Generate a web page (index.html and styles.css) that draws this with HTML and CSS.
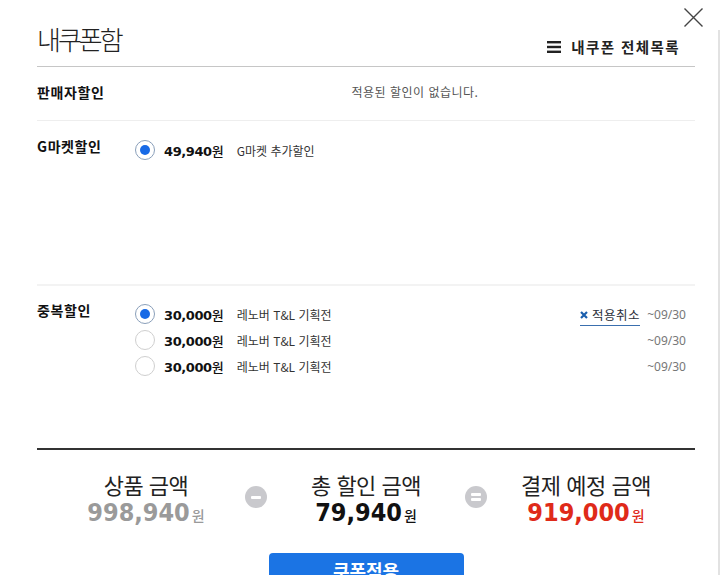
FILE: index.html
```html
<!DOCTYPE html>
<html lang="ko">
<head>
<meta charset="utf-8">
<title>내쿠폰함</title>
<link rel="stylesheet" href="styles.css">
</head>
<body>
<div class="popup">
  <div class="edge"></div>
  <button class="close" type="button" aria-label="닫기">
    <svg width="21" height="21" viewBox="0 0 21 21"><path d="M1.5 1.5 L19.5 19.5 M19.5 1.5 L1.5 19.5" stroke="#444" stroke-width="1.4" fill="none"/></svg>
  </button>
  <header class="head">
    <h1 class="title">내쿠폰함</h1>
    <a class="all-list" href="#">
      <svg class="menu-icon" width="14" height="12" viewBox="0 0 14 12"><rect x="0" y="0" width="14" height="2.4" fill="#222"/><rect x="0" y="4.8" width="14" height="2.4" fill="#222"/><rect x="0" y="9.6" width="14" height="2.4" fill="#222"/></svg>
      <span>내쿠폰 전체목록</span>
    </a>
  </header>

  <section class="row row-seller">
    <h2 class="row-label">판매자할인</h2>
    <p class="empty">적용된 할인이 없습니다.</p>
  </section>

  <section class="row row-gmarket">
    <h2 class="row-label">G마켓할인</h2>
    <ul class="coupons">
      <li class="coupon">
        <span class="radio on"></span>
        <strong class="amount">49,940<span class="unit">원</span></strong>
        <span class="name">G마켓 추가할인</span>
      </li>
    </ul>
  </section>

  <section class="row row-dup">
    <h2 class="row-label">중복할인</h2>
    <ul class="coupons">
      <li class="coupon">
        <span class="radio on"></span>
        <strong class="amount">30,000<span class="unit">원</span></strong>
        <span class="name">레노버 T&amp;L 기획전</span>
        <a class="cancel" href="#"><svg class="cancel-x" width="8" height="8" viewBox="0 0 8 8"><path d="M1 1 L7 7 M7 1 L1 7" stroke="#1b5fae" stroke-width="2.2"/></svg>적용취소</a>
        <span class="date">~09/30</span>
      </li>
      <li class="coupon">
        <span class="radio"></span>
        <strong class="amount">30,000<span class="unit">원</span></strong>
        <span class="name">레노버 T&amp;L 기획전</span>
        <span class="date">~09/30</span>
      </li>
      <li class="coupon">
        <span class="radio"></span>
        <strong class="amount">30,000<span class="unit">원</span></strong>
        <span class="name">레노버 T&amp;L 기획전</span>
        <span class="date">~09/30</span>
      </li>
    </ul>
  </section>

  <div class="summary">
    <div class="sum-col">
      <p class="sum-label">상품 금액</p>
      <p class="sum-value gray">998,940<span class="sum-unit">원</span></p>
    </div>
    <div class="op"><span class="op-circle minus"></span></div>
    <div class="sum-col">
      <p class="sum-label">총 할인 금액</p>
      <p class="sum-value">79,940<span class="sum-unit">원</span></p>
    </div>
    <div class="op"><span class="op-circle equals"></span></div>
    <div class="sum-col">
      <p class="sum-label">결제 예정 금액</p>
      <p class="sum-value red">919,000<span class="sum-unit">원</span></p>
    </div>
  </div>

  <div class="actions">
    <button class="apply" type="button">쿠폰적용</button>
  </div>
</div>
</body>
</html>
```

FILE: styles.css
```css
html, body {
  margin: 0;
  padding: 0;
  background: #fff;
}

body {
  font-family: "Noto Sans CJK KR", "Noto Sans", sans-serif;
  color: #222;
}

h1, h2, p, ul {
  margin: 0;
  padding: 0;
}

ul {
  list-style: none;
}

a {
  color: inherit;
  text-decoration: none;
}

.popup {
  position: relative;
  width: 720px;
  height: 575px;
  overflow: hidden;
  box-sizing: border-box;
  padding: 0 25px 0 37px;
}

.edge {
  position: absolute;
  right: 0;
  top: 30px;
  bottom: 0;
  width: 2px;
  background: #e2e2e2;
}

.close {
  position: absolute;
  top: 7px;
  left: 683px;
  width: 21px;
  height: 21px;
  padding: 0;
  border: 0;
  background: none;
}

.close svg {
  display: block;
}

/* header */
.head {
  height: 67px;
  box-sizing: border-box;
  border-bottom: 1px solid #c6c6c6;
  display: flex;
  justify-content: space-between;
  align-items: flex-start;
}

.title {
  margin-top: 21px;
  font-size: 26px;
  line-height: 35px;
  font-weight: 300;
  letter-spacing: -3px;
  color: #222;
}

.all-list {
  align-self: flex-end;
  margin-bottom: 9px;
  margin-right: 15px;
  display: flex;
  align-items: center;
  font-size: 14.5px;
  line-height: 20px;
  font-weight: 700;
  letter-spacing: 1.4px;
  color: #222;
}

.menu-icon {
  display: block;
  margin-right: 10px;
}

/* rows */
.row {
  display: flex;
  box-sizing: border-box;
}

.row-label {
  width: 98px;
  flex: none;
  font-size: 14px;
  line-height: 22px;
  font-weight: 700;
  letter-spacing: 0.6px;
  color: #111;
}

.row-seller {
  height: 54px;
  padding-bottom: 4px;
  align-items: center;
  border-bottom: 1px solid #eeeeee;
}

.empty {
  flex: 1;
  text-align: center;
  font-size: 12px;
  line-height: 20px;
  letter-spacing: 0.5px;
  color: #555;
}

.row-gmarket {
  height: 165px;
  padding-top: 16px;
  border-bottom: 2px solid #f3f3f3;
  align-items: flex-start;
}

.row-dup {
  height: 162px;
  padding-top: 15px;
  align-items: flex-start;
}

.row-gmarket .row-label,
.row-dup .row-label {
  margin-top: -2px;
}

.coupons {
  flex: 1;
  padding-right: 9px;
}

.coupon {
  display: flex;
  align-items: center;
  height: 26px;
}

.radio {
  flex: none;
  width: 18px;
  height: 18px;
  border-radius: 50%;
  border: 1px solid #cfcfcf;
  background: #fff;
  margin-right: 9px;
  position: relative;
}

.radio.on {
  border-color: #8a9fba;
}

.radio.on::after {
  content: "";
  position: absolute;
  left: 4px;
  top: 4px;
  width: 10px;
  height: 10px;
  border-radius: 50%;
  background: #1669e6;
}

.amount {
  font-family: "DejaVu Sans", "Noto Sans", sans-serif;
  font-size: 13px;
  letter-spacing: -0.4px;
  font-weight: 700;
  color: #111;
  margin-right: 13px;
}

.amount .unit {
  font-family: "Noto Sans CJK KR", sans-serif;
  font-weight: 500;
  font-size: 13px;
  letter-spacing: 0;
}

.name {
  flex: 1;
  font-size: 12px;
  color: #333;
}

.cancel {
  display: flex;
  align-items: center;
  font-size: 12.5px;
  line-height: 18px;
  color: #2b2f3a;
  letter-spacing: 0.5px;
  border-bottom: 1px solid #3a6fae;
  padding-bottom: 1px;
  margin-top: 4px;
  margin-right: 7px;
}

.cancel-x {
  display: block;
  margin-right: 4px;
}

.date {
  width: 39px;
  text-align: right;
  font-family: "Noto Sans", sans-serif;
  font-size: 12px;
  color: #777;
}

/* summary */
.summary {
  border-top: 2px solid #333;
  padding-top: 20px;
  display: flex;
  justify-content: center;
}

.sum-col {
  width: 176px;
  text-align: center;
}

.sum-label {
  font-size: 22px;
  line-height: 28px;
  font-weight: 400;
  color: #222;
  letter-spacing: -0.5px;
}

.sum-value {
  font-family: "DejaVu Sans Condensed", "Liberation Sans", sans-serif;
  font-stretch: condensed;
  font-size: 25px;
  line-height: 28px;
  margin-top: 1px;
  font-weight: 700;
  color: #111;
}

.sum-value.gray {
  color: #9a9a9a;
}

.sum-value.red {
  color: #df2a19;
}

.sum-unit {
  font-family: "Noto Sans CJK KR", sans-serif;
  font-size: 14px;
  font-weight: 500;
  margin-left: 2px;
}

.op {
  width: 44px;
  display: flex;
  justify-content: center;
  padding-top: 16px;
}

.op-circle {
  width: 22px;
  height: 22px;
  border-radius: 50%;
  background: #c9c9cd;
  position: relative;
}

.op-circle::before,
.op-circle.equals::after {
  content: "";
  position: absolute;
  left: 6px;
  width: 10px;
  height: 3px;
  border-radius: 1px;
  background: #fff;
}

.op-circle.minus::before {
  top: 9.5px;
}

.op-circle.equals::before {
  top: 7px;
}

.op-circle.equals::after {
  top: 12px;
}

.actions {
  display: flex;
  justify-content: center;
  margin-top: 24px;
}

.apply {
  width: 195px;
  height: 46px;
  border: 0;
  border-radius: 4px;
  background: #1b74e4;
  color: #fff;
  font-family: "Noto Sans CJK KR", sans-serif;
  font-size: 18px;
  font-weight: 700;
  text-decoration: underline;
  padding: 0;
  line-height: 24px;
  align-self: flex-start;
  display: flex;
  justify-content: center;
  align-items: flex-start;
  padding-top: 5px;
  box-sizing: border-box;
}
```
